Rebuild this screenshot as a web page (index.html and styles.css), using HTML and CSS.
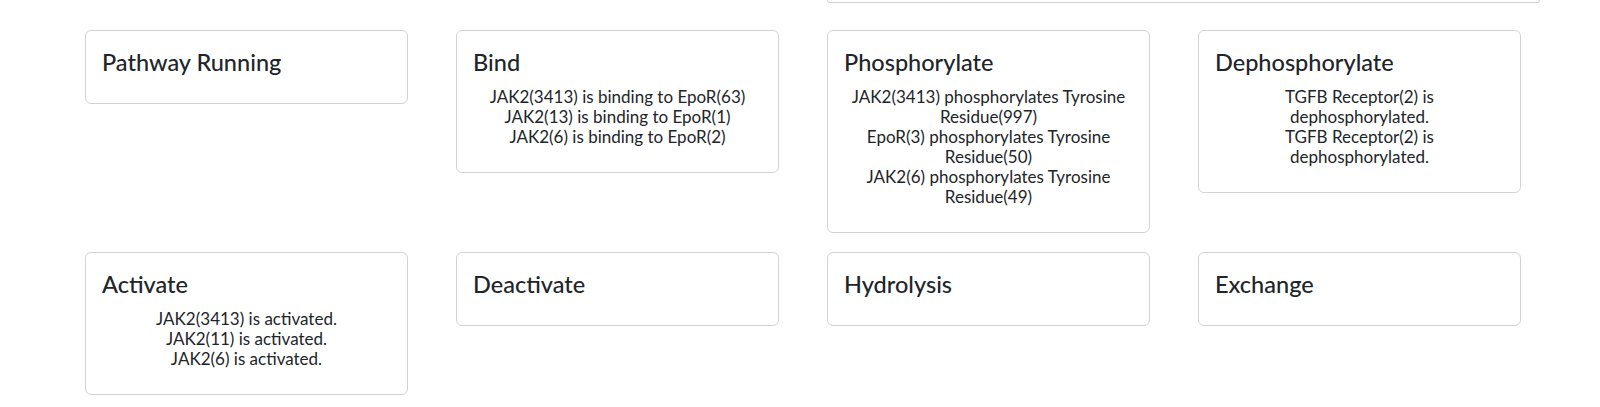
FILE: index.html
```html
<!DOCTYPE html>
<html lang="en">
<head>
<meta charset="utf-8">
<title>Pathway</title>
<link rel="stylesheet" href="styles.css">
</head>
<body>
<div class="page">
  <div class="top-panel"></div>
  <div class="grid">
    <div class="card"><div class="card-body"><h4 class="card-title">Pathway Running</h4></div></div>
    <div class="card"><div class="card-body"><h4 class="card-title">Bind</h4>
      <div class="card-text">JAK2(3413) is binding to EpoR(63)<br>JAK2(13) is binding to EpoR(1)<br>JAK2(6) is binding to EpoR(2)</div></div></div>
    <div class="card"><div class="card-body"><h4 class="card-title">Phosphorylate</h4>
      <div class="card-text">JAK2(3413) phosphorylates Tyrosine Residue(997)<br>EpoR(3) phosphorylates Tyrosine Residue(50)<br>JAK2(6) phosphorylates Tyrosine Residue(49)</div></div></div>
    <div class="card"><div class="card-body"><h4 class="card-title">Dephosphorylate</h4>
      <div class="card-text">TGFB Receptor(2) is dephosphorylated.<br>TGFB Receptor(2) is dephosphorylated.</div></div></div>
    <div class="card"><div class="card-body"><h4 class="card-title">Activate</h4>
      <div class="card-text">JAK2(3413) is activated.<br>JAK2(11) is activated.<br>JAK2(6) is activated.</div></div></div>
    <div class="card"><div class="card-body"><h4 class="card-title">Deactivate</h4></div></div>
    <div class="card"><div class="card-body"><h4 class="card-title">Hydrolysis</h4></div></div>
    <div class="card"><div class="card-body"><h4 class="card-title">Exchange</h4></div></div>
  </div>
</div>
</body>
</html>
```

FILE: styles.css
```css
html, body {
  margin: 0;
  padding: 0;
  background: #ffffff;
}
body {
  font-family: Lato, "Liberation Sans", sans-serif;
  color: #212529;
  font-size: 16px;
}
.page {
  padding-left: 85px;
}
.top-panel {
  box-sizing: border-box;
  margin-left: 742px;
  width: 713px;
  height: 3px;
  border: 1px solid #d3d3d3;
  border-top: none;
  border-radius: 0 0 6px 6px;
}
.grid {
  margin-top: 27px;
  display: grid;
  grid-template-columns: repeat(4, 323px);
  column-gap: 48px;
  row-gap: 19px;
  align-items: start;
}
.card {
  box-sizing: border-box;
  border: 1px solid #d3d3d3;
  border-radius: 6px;
  background: #fff;
}
.card-body {
  padding: 16px;
}
.card-title {
  margin: 0 0 9px 0;
  font-size: 23.5px;
  font-weight: 500;
  line-height: 31px;
}
.card-text {
  margin: 1px 0 9px 0;
  padding: 0 2px;
  text-align: center;
  font-size: 17px;
  line-height: 20px;
}
```
